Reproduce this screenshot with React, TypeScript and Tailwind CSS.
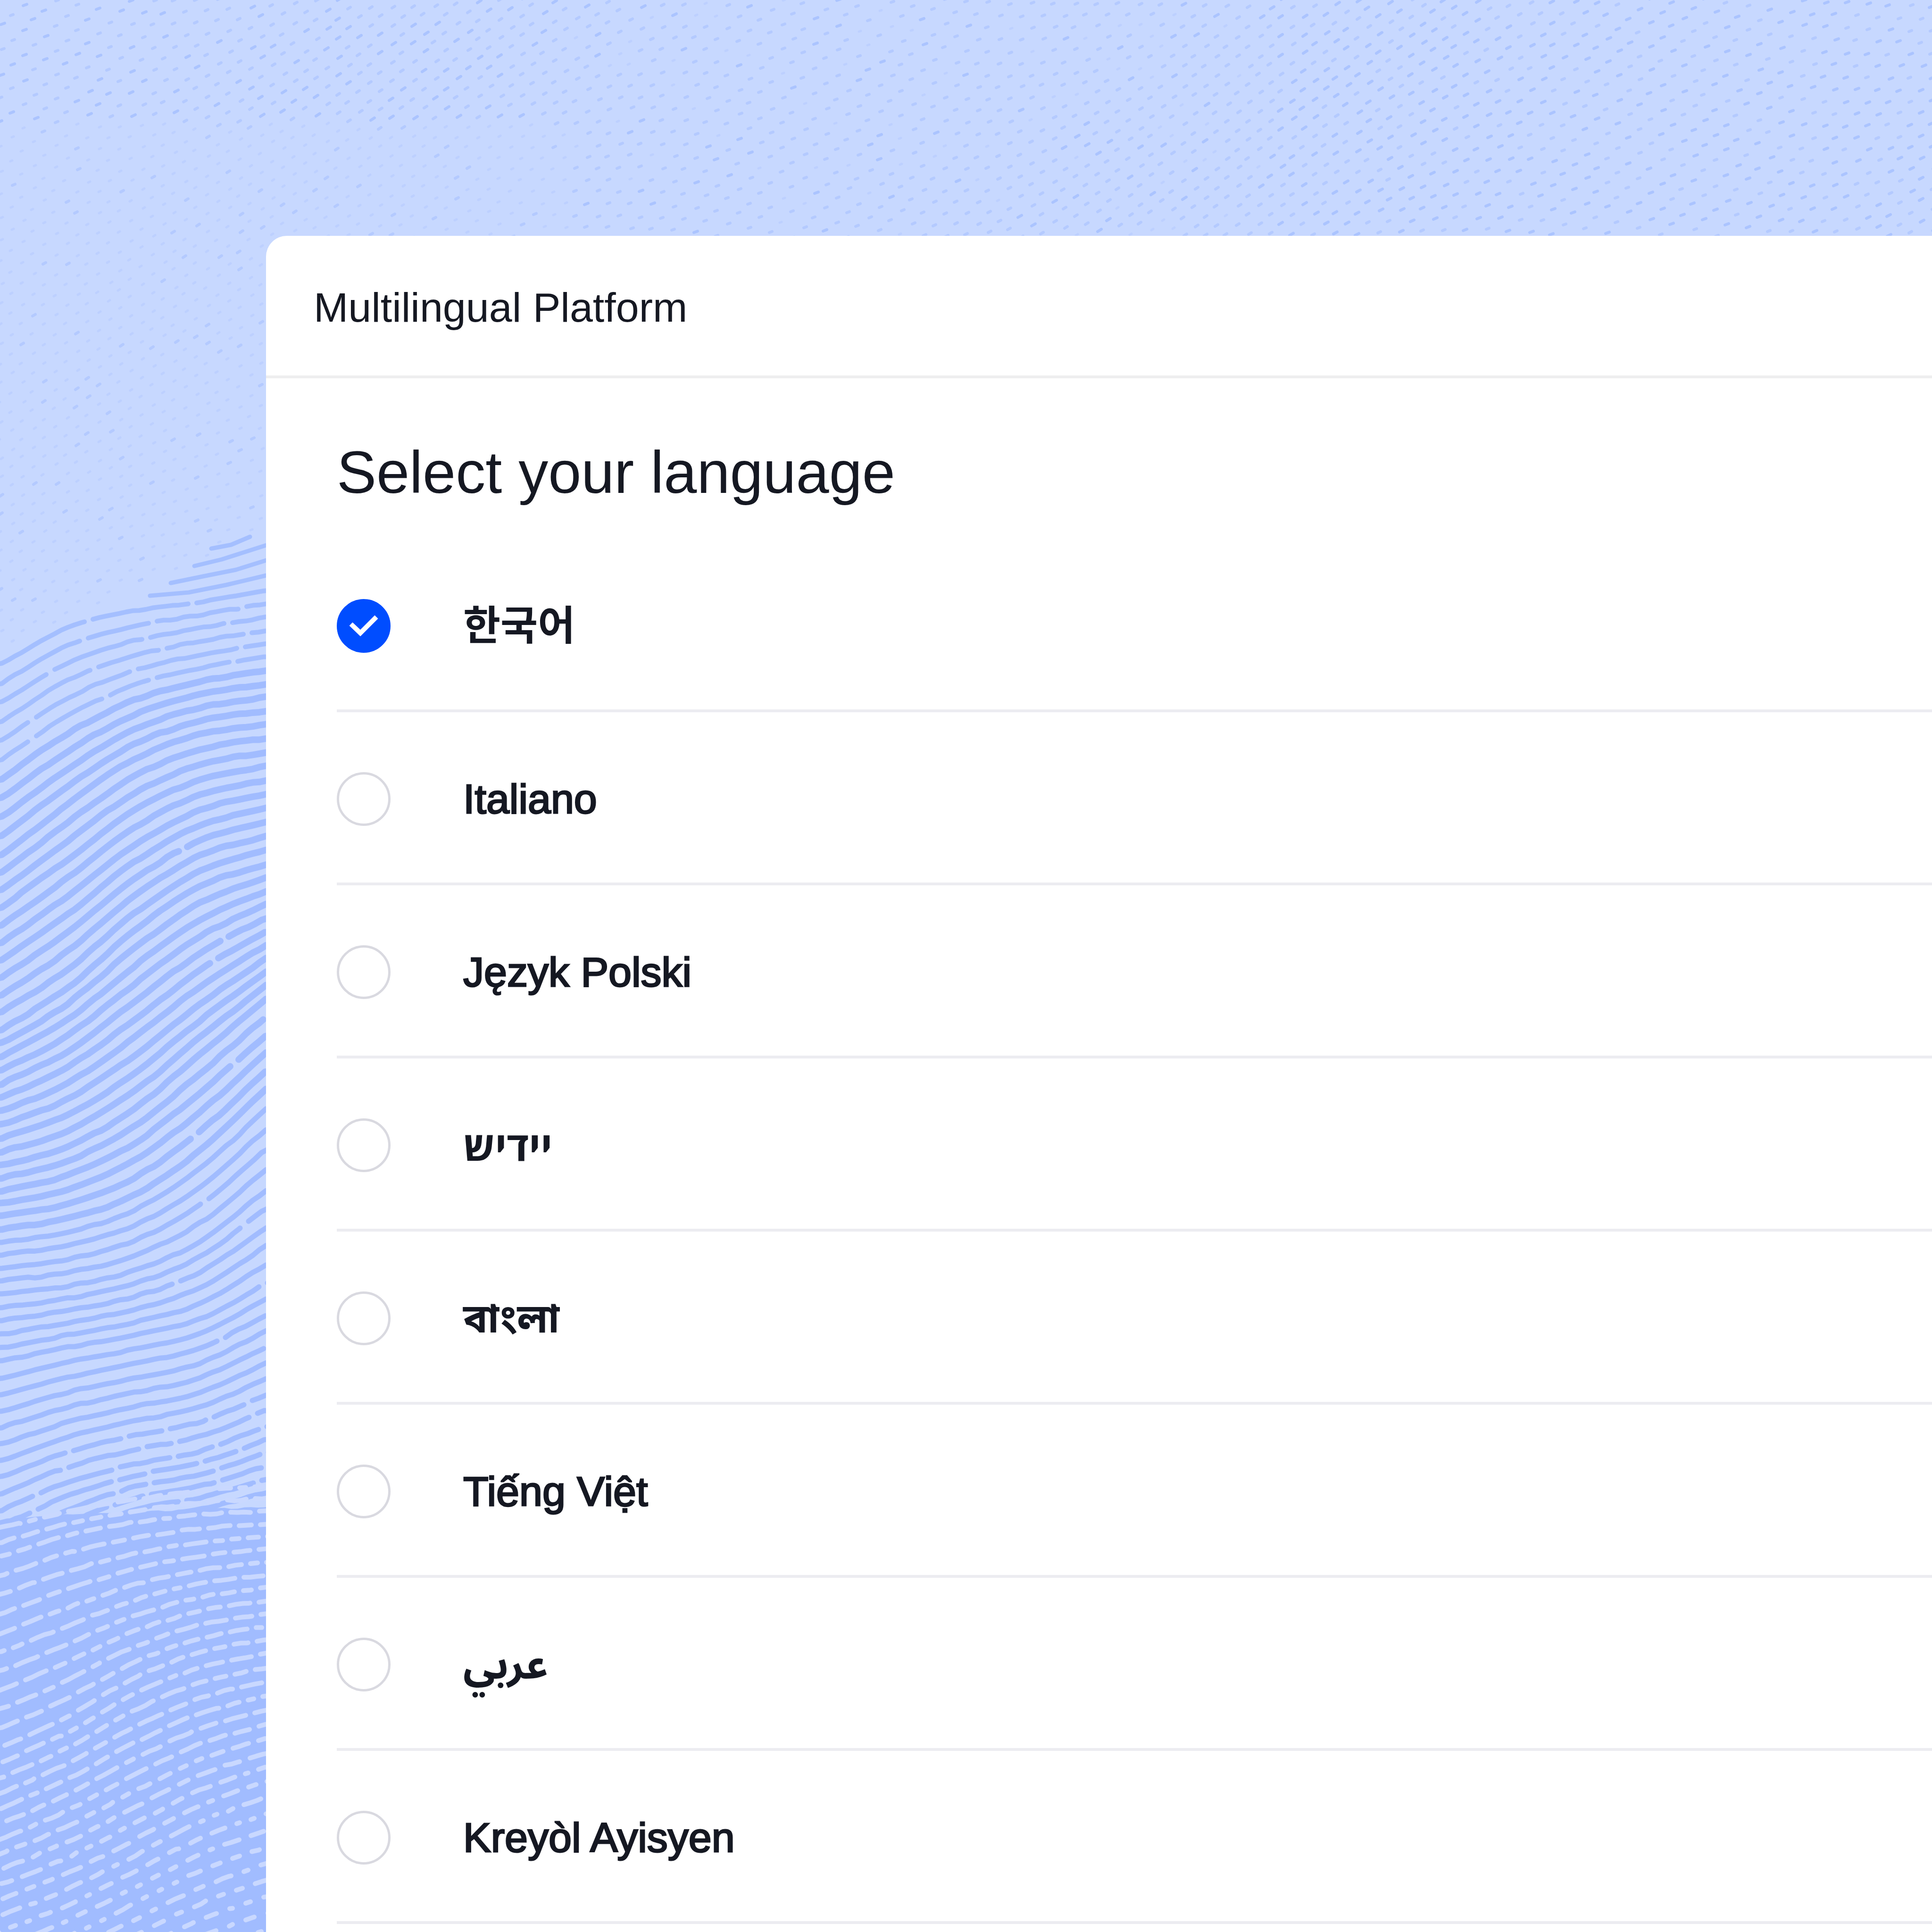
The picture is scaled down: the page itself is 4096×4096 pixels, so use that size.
import { useState } from "react";

type Language = { code: string; label: string; font?: string; dir?: "rtl" };

const LATIN = "text-[88px] [-webkit-text-stroke:3px]";

const LANGUAGES: Language[] = [
  { code: "ko", label: "한국어", font: "text-[86px] font-bold" },
  { code: "it", label: "Italiano" },
  { code: "pl", label: "Język Polski" },
  {
    code: "yi",
    label: "יידיש",
    dir: "rtl",
    font: "font-['Open_Sans','Liberation_Sans',sans-serif] text-[86px] font-bold",
  },
  { code: "bn", label: "বাংলা", font: "text-[86px] font-bold" },
  { code: "vi", label: "Tiếng Việt" },
  { code: "ar", label: "عربي", dir: "rtl", font: "text-[86px] font-bold" },
  { code: "ht", label: "Kreyòl Ayisyen" },
];

// Ridges of the wave: line number, then y sampled at x = 0, 141, 282, 423, 564.
type Ridge = [line: number, ys: number[]];

const RIDGES: Ridge[] = [
  [0, [1410, 1331, 1296, 1276, 1251]],
  [10, [1816, 1707, 1611, 1557, 1535]],
  [20, [2185, 2096, 1975, 1879, 1832]],
  [30, [2472, 2432, 2353, 2236, 2118]],
  [35, [2606, 2584, 2535, 2440, 2309]],
  [40, [2743, 2727, 2695, 2632, 2523]],
  [45, [2887, 2857, 2831, 2797, 2721]],
  [54, [3203, 3143, 3105, 3077, 3024]],
  [60, [3400, 3320, 3250, 3225, 3192]],
];
const LOWER_RIDGES: Ridge[] = [
  [-2, [3240, 3205, 3180, 3160, 3150]],
  [0, [3301, 3255, 3228, 3212, 3203]],
  [10, [3706, 3640, 3559, 3503, 3475]],
  [20, [4028, 3972, 3902, 3828, 3776]],
  [30, [4370, 4310, 4240, 4176, 4126]],
];
const SHORE = [3222, 3210, 3205, 3200, 3195];
const STEP_X = 141;

const noise = (a: number, b: number) => {
  const n = Math.sin(a * 127.1 + b * 311.7) * 43758.5453;
  return n - Math.floor(n);
};

function ridgeY(ridge: number[], x: number) {
  const t = Math.min(Math.max(x / STEP_X, 0), 4);
  const i = Math.min(Math.floor(t), 3);
  const f = t - i;
  const p1 = ridge[i];
  const p2 = ridge[i + 1];
  const p0 = i > 0 ? ridge[i - 1] : 2 * p1 - p2;
  const p3 = i < 3 ? ridge[i + 2] : 2 * p2 - p1;
  return (
    p1 +
    0.5 * f * (p2 - p0 + f * (2 * p0 - 5 * p1 + 4 * p2 - p3 + f * (3 * (p1 - p2) + p3 - p0)))
  );
}

function spread(ridges: Ridge[]) {
  const lines: number[][] = [];
  for (let i = 0; i < ridges.length - 1; i++) {
    const [from, a] = ridges[i];
    const [to, b] = ridges[i + 1];
    const count = to - from;
    for (let k = 0; k < count; k++) {
      lines.push(a.map((v, n) => v + ((b[n] - v) * k) / count));
    }
  }
  return lines;
}

function trace(ridge: number[], from: number, to: number, seed: number) {
  let d = "";
  for (let x = from; x < to + 14; x += 14) {
    const px = Math.min(x, to);
    const y = ridgeY(ridge, px) + (noise(Math.round(px / 28), seed) - 0.5) * 3;
    d += `${d ? "L" : "M"}${px.toFixed(0)} ${y.toFixed(1)}`;
  }
  return d;
}

function upperWave() {
  const lines = spread(RIDGES);
  const segments = lines.map((line, row) => {
    // breaks are frequent near the crest and near the trough
    const edge = row < 6 || row > 51;
    let d = "";
    let x = -10;
    while (x < 570) {
      const len = edge ? 50 + noise(row, x) * 160 : 360 + noise(row, x) * 900;
      d += trace(line, x, Math.min(x + len, 576), row);
      x += len + 18;
    }
    return d;
  });
  return {
    crest: segments.slice(0, 6).join(""),
    slope: segments.slice(6, 36).join(""),
    base: segments.slice(36).join(""),
  };
}

function lowerDashes() {
  return spread(LOWER_RIDGES)
    .map((line, row) => {
      let d = "";
      let x = -20 + noise(row, 3) * 30;
      while (x < 570) {
        const deep = Math.max(0, ridgeY(line, x) - 3850 + x * 0.5) / 400;
        const len = Math.max(6, 12 + noise(row, x) * 36 - deep * 16);
        d += trace(line, x, x + len, row);
        x += len + 19 + deep * 8;
      }
      return d;
    })
    .join("");
}

function speckles() {
  const levels = ["", "", ""];
  for (let row = -6; row < 64; row++) {
    for (let col = 0; col < 92; col++) {
      const x = col * 46 + (Math.abs(row) % 2) * 23 + (noise(row, col) - 0.5) * 8;
      const y =
        row * 23 +
        48 * Math.sin(x / 310 + row / 14) +
        16 * Math.sin(x / 140) +
        (noise(col, row) - 0.5) * 4;
      if (x > 575 ? y > 505 : y > 1375 - x * 0.45) continue;
      const slope = (48 / 310) * Math.cos(x / 310 + row / 14) - 0.5;
      const base = x > 2700 ? 0.75 : x > 1200 ? 0.55 : y < 260 ? 0.65 : 0.25;
      const strength = base + (noise(row + 9, col) - 0.5) * 0.4;
      const level = strength > 0.7 ? 2 : strength > 0.4 ? 1 : 0;
      const w = 4 + level * 2;
      levels[level] += `M${x.toFixed(0)} ${y.toFixed(0)}l${w} ${(w * slope).toFixed(1)}`;
    }
  }
  return levels;
}

const CREST_TIPS =
  "M448 1163L490 1155L530 1138M412 1200L470 1186L564 1156M362 1236L430 1222L500 1208L564 1188M318 1263L400 1256L480 1240L564 1220";
const WAVE = upperWave();
const LOWER_DASHES = lowerDashes();
const SPECKLES = speckles();
const LOWER_AREA = `${trace(SHORE, 0, 576, 1)}L576 4200L0 4200Z`;

function Backdrop() {
  return (
    <svg
      aria-hidden="true"
      viewBox="0 0 4096 4096"
      preserveAspectRatio="xMinYMin slice"
      className="absolute inset-0 h-full w-full"
      fill="none"
      strokeLinecap="round"
      strokeLinejoin="round"
    >
      <path d={SPECKLES[0]} stroke="#bdd0ff" strokeWidth={5} />
      <path d={SPECKLES[1]} stroke="#b4caff" strokeWidth={6} />
      <path d={SPECKLES[2]} stroke="#abc4ff" strokeWidth={6} />
      <path d={CREST_TIPS} stroke="#a4bfff" strokeWidth={9} />
      <path d={WAVE.crest} stroke="#a4bfff" strokeWidth={10} />
      <path d={WAVE.slope} stroke="#a1bcff" strokeWidth={14} />
      <path d={WAVE.base} stroke="#a1bcff" strokeWidth={11} />
      <path d={LOWER_AREA} fill="#a1bcff" />
      <path d={LOWER_DASHES} stroke="#c9d8ff" strokeWidth={10} />
    </svg>
  );
}

function LanguageRow({
  language,
  checked,
  onSelect,
}: {
  language: Language;
  checked: boolean;
  onSelect: () => void;
}) {
  return (
    <li className="border-b-6 border-[#ececf1]">
      <label className="flex h-[361px] cursor-pointer items-center pt-1.5">
        <span className="relative size-[114px] shrink-0">
          <input
            type="radio"
            name="language"
            value={language.code}
            checked={checked}
            onChange={onSelect}
            className="block size-full appearance-none rounded-full border-5 border-[#d9d9e0] checked:border-[#004dff] checked:bg-[#004dff]"
          />
          {checked && (
            <svg
              viewBox="0 0 114 114"
              className="pointer-events-none absolute inset-0"
              fill="none"
              stroke="#fff"
              strokeWidth={10}
            >
              <path d="M30 53L50 72L84 38" />
            </svg>
          )}
        </span>
        <span
          lang={language.code}
          dir={language.dir}
          className={`ml-[154px] leading-[120px] ${language.font ?? LATIN}`}
        >
          {language.label}
        </span>
      </label>
    </li>
  );
}

export default function App() {
  const [selected, setSelected] = useState("ko");

  return (
    <main className="relative flex min-h-screen flex-col overflow-hidden bg-[#c7d8ff] pt-[500px] pl-[564px] font-['Liberation_Sans','Noto_Sans_CJK_KR','Noto_Sans_Bengali','Noto_Sans_Arabic',sans-serif] text-[#151822]">
      <Backdrop />
      <section className="relative flex-1 rounded-tl-[44px] bg-white">
        <header className="flex h-[302px] items-center border-b-6 border-[#eeeeef] pt-2 pl-[101px]">
          <h1 className="text-[88px] leading-[120px]">Multilingual Platform</h1>
        </header>
        <div className="pt-32 pl-[150px]">
          <h2 id="language-heading" className="text-[126px] leading-[144px]">
            Select your language
          </h2>
          <ul role="radiogroup" aria-labelledby="language-heading" className="mt-[69px]">
            {LANGUAGES.map((language) => (
              <LanguageRow
                key={language.code}
                language={language}
                checked={selected === language.code}
                onSelect={() => setSelected(language.code)}
              />
            ))}
          </ul>
        </div>
      </section>
    </main>
  );
}
